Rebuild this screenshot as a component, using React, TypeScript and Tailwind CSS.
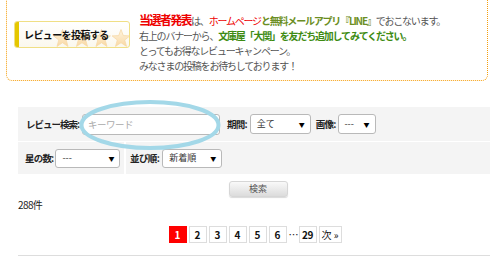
import React from "react";

const jp = { fontFamily: '"Noto Sans CJK JP", "Noto Sans", sans-serif' };

function Star({ x }: { x: number }) {
  return (
    <polygon
      transform={`translate(${x},0)`}
      points="9.5,0.5 11.8,6.6 18.4,6.9 13.2,11 15,17.4 9.5,13.7 4,17.4 5.8,11 0.6,6.9 7.2,6.6"
      fill="url(#starfill)"
      stroke="#f6d9a8"
      strokeWidth="0.8"
    />
  );
}

// fake select box, the picture shows closed dropdowns only
function Select({ label, w, h = "h-[20px]" }: { label: string; w: string; h?: string }) {
  return (
    <div className={`${w} ${h} flex items-center justify-between rounded-[3px] border border-[#b9b9b9] bg-white pl-[6px] pr-[5px]`}>
      <span className="text-[9px] text-[#333]">{label}</span>
      <span className="text-[6px] text-black">▼</span>
    </div>
  );
}

export default function App() {
  const pages = ["1", "2", "3", "4", "5", "6"];

  return (
    <div className="relative h-[273px] w-[500px] overflow-hidden bg-white" style={jp}>
      {/* campaign box */}
      <div className="ml-[6px] mt-[-10px] flex h-[91px] w-[482px] rounded-b-[6px] border-[1.5px] border-dotted border-[#f59e0b] pt-[21px]">
        <div className="relative ml-[7px] mt-[9px] flex h-[27px] w-[116px] shrink-0 items-center overflow-hidden rounded-[3px] border border-[#f0df85] bg-gradient-to-b from-white to-[#fbf8ee]">
          <div className="h-full w-[4px] bg-[#e5c700]" />
          <svg className="absolute left-[38px] top-[7px]" width="78" height="19" viewBox="0 0 78 19">
            <defs>
              <linearGradient id="starfill" x1="0" y1="0" x2="0" y2="1">
                <stop offset="0" stopColor="#fff5e0" />
                <stop offset="1" stopColor="#f9d8a4" />
              </linearGradient>
            </defs>
            <Star x={0} />
            <Star x={19.5} />
            <Star x={39} />
            <Star x={58.5} />
          </svg>
          <span className="relative ml-[5px] text-[10px] font-bold tracking-[-0.6px] text-[#111]">レビューを投稿する</span>
        </div>

        <div className="ml-[9px] text-[10px] tracking-[-1.2px] text-[#555]">
          <div className="h-[16px] leading-[16px]">
            <span className="text-[12px] font-bold tracking-[-1.6px] text-[#ee0000]">当選者発表</span>
            は、<span className="text-[#ee0000]">ホームページ</span>
            <span className="font-bold text-[#6b8e23]">と無料メールアプリ『LINE』</span>でおこないます。
          </div>
          <div className="leading-[15px]">
            右上のバナーから、<span className="font-bold text-[#3d8b12]">文庫屋「大関」を友だち追加してみてください。</span>
          </div>
          <div className="leading-[15px]">とってもお得なレビューキャンペーン。</div>
          <div className="leading-[15px]">みなさまの投稿をお待ちしております！</div>
        </div>
      </div>

      {/* search form */}
      <div className="relative mx-[18px] mt-[26px] w-[472px] bg-[#f4f4f4]">
        <div className="flex h-[35px] items-center border-b border-white pl-[8px]">
          <span className="text-[9.5px] font-bold tracking-[-1px] text-[#222]">レビュー検索:</span>
          <div className="ml-[3px] flex h-[21px] w-[138px] items-center rounded-[3px] border border-[#b9b9b9] bg-white pl-[5px]">
            <span className="text-[9.5px] tracking-[-0.5px] text-[#aaa]">キーワード</span>
          </div>
          <span className="ml-[7px] mr-[3px] text-[9.5px] font-bold tracking-[-0.8px] text-[#222]">期間:</span>
          <Select label="全て" w="w-[61px]" />
          <span className="ml-[5px] mr-[2px] text-[9.5px] font-bold tracking-[-0.8px] text-[#222]">画像:</span>
          <Select label="---" w="w-[38px]" />
        </div>
        <div className="flex h-[32px]">
          <div className="flex w-[108px] items-center border-r-2 border-white pl-[7px]">
            <span className="mr-[2px] text-[9.5px] font-bold tracking-[-0.8px] text-[#222]">星の数:</span>
            <Select label="---" w="w-[65px]" h="h-[19px]" />
          </div>
          <div className="flex items-center pl-[4px]">
            <span className="mr-[3px] text-[9.5px] font-bold tracking-[-0.6px] text-[#222]">並び順:</span>
            <Select label="新着順" w="w-[60px]" h="h-[19px]" />
          </div>
        </div>
        {/* blue marker ring over the keyword box */}
        <svg className="absolute left-[60px] top-[-8px]" width="144" height="52" viewBox="0 0 144 52">
          <ellipse cx="72" cy="26" rx="68.5" ry="23" fill="none" stroke="#a3d8e8" strokeWidth="4" />
        </svg>
      </div>

      <div className="mt-[7px] flex justify-center pl-[16px]">
        <button className="flex h-[16px] w-[59px] items-center justify-center rounded-[3px] border border-[#d6d6d6] bg-gradient-to-b from-[#f9f9f9] to-[#dcdcdc] text-[9px] text-[#555] shadow-[0_1px_1px_rgba(0,0,0,0.15)]">
          検索
        </button>
      </div>

      <div className="ml-[18px] mt-[1px] text-[10px] leading-[14px] tracking-[-0.6px] text-[#222]">288件</div>

      <div className="mt-[14px] flex items-center justify-center gap-[2px] pl-[10px] text-[10px] font-bold">
        {pages.map((p) =>
          p === "1" ? (
            <div key={p} className="flex h-[17px] w-[18px] items-center justify-center bg-[#ff0000] text-white">{p}</div>
          ) : (
            <div key={p} className="flex h-[17px] w-[18px] items-center justify-center border border-[#dddddd] text-[#111]">{p}</div>
          )
        )}
        <span className="w-[8px] font-normal text-[#111]">…</span>
        <div className="flex h-[17px] w-[18px] items-center justify-center border border-[#dddddd] tracking-[-0.5px] text-[#111]">29</div>
        <div className="flex h-[17px] w-[23px] items-center justify-center border border-[#dddddd] font-normal text-[#111]">次 »</div>
      </div>

      <div className="ml-[18px] mt-[12px] h-px w-[472px] bg-[#dddddd]" />
    </div>
  );
}
